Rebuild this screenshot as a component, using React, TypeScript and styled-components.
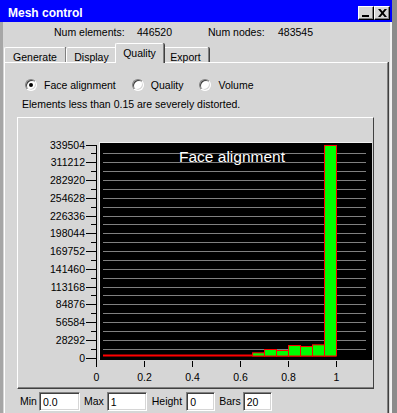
import React from 'react';
import styled, { createGlobalStyle } from 'styled-components';

const GlobalStyle = createGlobalStyle`
  html, body {
    margin: 0;
    padding: 0;
    background: #8c8c8c;
  }
  body {
    font-family: "Liberation Sans", Arial, sans-serif;
    font-size: 10.5px;
    color: #000;
  }
`;

const tabs = ['Generate', 'Display', 'Quality', 'Export'];
const tabWidths = [62, 51, 45, 47];

const yLabels = ['339504', '311212', '282920', '254628', '226336', '198044', '169752',
  '141460', '113168', '84876', '56584', '28292', '0'];
const xLabels = ['0', '0.2', '0.4', '0.6', '0.8', '1'];

// 20 bars, 0..1
const bars = [0, 0, 0, 0, 0, 0, 0, 0, 0, 0, 0, 0, 0, 5150, 10460, 8850, 16900, 15290, 18020, 339504];

const MAX = 339504;
const OX = 78;
const TOP = 27.5;
const BASE = 238;
const HALF = 8.875;

const Chart = () => {
  const scale = (BASE - TOP) / MAX;
  const crisp = (v: number) => Math.floor(v) + 0.5;
  const grid = [];
  for (let k = 1; k <= 23; k++) grid.push(crisp(27 + HALF * k));
  const minor = [];
  for (let k = 1; k < 24; k += 2) minor.push(crisp(27 + HALF * k));

  return (
    <svg width="355" height="270" style={{ display: 'block' }}>
      <rect x="81" y="24" width="273" height="218" fill="#f2f2f2" />
      <rect x="82" y="25" width="272" height="217" fill="#000" />
      {grid.map((y) => (
        <line key={y} x1="85" x2="348" y1={y} y2={y} stroke="#808080" strokeWidth="1" />
      ))}
      <text x="161" y="44.3" fill="#fff" fontSize="15.5" fontFamily="Liberation Sans, Arial, sans-serif">
        Face alignment
      </text>
      <rect x="85" y="236.5" width={OX + 240 - 85} height="2" fill="#ff0000" />
      {bars.map((v, i) => {
        if (v <= 0) return null;
        const h = v * scale;
        const x0 = OX + 12 * i;
        return (
          <rect key={i} x={x0 + 0.5} y={BASE - h} width="12" height={h}
            fill="#00ff00" stroke="#ff0000" strokeWidth="1" />
        );
      })}
      <line x1="78.5" x2="78.5" y1="27" y2="249" stroke="#000" />
      {yLabels.map((t, j) => {
        const y = crisp(27 + 17.75 * j);
        return (
          <g key={t}>
            <line x1="68" x2="78" y1={y} y2={y} stroke="#000" />
            <text x="67" y={y} dy="0.36em" textAnchor="end" fontSize="10.5"
              fontFamily="Liberation Sans, Arial, sans-serif">{t}</text>
          </g>
        );
      })}
      {minor.map((y) => (
        <line key={'m' + y} x1="73" x2="78" y1={y} y2={y} stroke="#000" />
      ))}
      {xLabels.map((t, j) => {
        const x = OX + 48 * j + 0.5;
        return (
          <g key={t}>
            <line x1={x} x2={x} y1="243" y2="249" stroke="#000" />
            <text x={x} y="259" dy="0.36em" textAnchor="middle" fontSize="10.5"
              fontFamily="Liberation Sans, Arial, sans-serif">{t}</text>
          </g>
        );
      })}
    </svg>
  );
};

export default function App() {
  return (
    <>
      <GlobalStyle />
      <Window>
        <TitleBar>
          <TitleText>Mesh control</TitleText>
          <CaptionButtons>
            <CaptionButton $kind="min"><MinGlyph /></CaptionButton>
            <CaptionButton $kind="close">
              <svg width="9" height="8" viewBox="0 0 9 8">
                <path d="M0 0h2.4l2.1 2.6L6.6 0H9L5.7 4 9 8H6.6L4.5 5.4 2.4 8H0l3.3-4z" fill="#000" />
              </svg>
            </CaptionButton>
          </CaptionButtons>
        </TitleBar>
        <Body>
          <InfoRow>
            <span>Num elements:</span>
            <span>446520</span>
            <span>Num nodes:</span>
            <span>483545</span>
          </InfoRow>
          <TabRow>
            {tabs.map((t, i) => (
              <Tab key={t} $active={t === 'Quality'} $w={tabWidths[i]}>{t}</Tab>
            ))}
          </TabRow>
          <Panel>
            <RadioRow>
              <RadioItem><Radio $checked /> Face alignment</RadioItem>
              <RadioItem><Radio /> Quality</RadioItem>
              <RadioItem><Radio /> Volume</RadioItem>
            </RadioRow>
            <Desc>Elements less than 0.15 are severely distorted.</Desc>
            <ChartFrame>
              <Chart />
            </ChartFrame>
            <InputRow>
              <FieldLabel $gap={2}>Min</FieldLabel>
              <Field $w={41} $gap={4} value="0.0" readOnly />
              <FieldLabel $gap={3}>Max</FieldLabel>
              <Field $w={40} $gap={5} value="1" readOnly />
              <FieldLabel $gap={4}>Height</FieldLabel>
              <Field $w={29} $gap={4} value="0" readOnly />
              <FieldLabel $gap={2}>Bars</FieldLabel>
              <Field $w={29} $gap={0} value="20" readOnly />
            </InputRow>
          </Panel>
        </Body>
      </Window>
    </>
  );
}

const Window = styled.div`
  width: 392px;
  height: 413px;
  display: flex;
  flex-direction: column;
  overflow: hidden;
`;

const TitleBar = styled.div`
  height: 22px;
  flex: none;
  background: #0000ff;
  display: flex;
  align-items: center;
  padding: 0 2px 0 8px;
  box-sizing: border-box;
`;

const TitleText = styled.div`
  flex: 1;
  color: #fff;
  font-weight: bold;
  font-size: 12px;
  line-height: 14px;
  padding-top: 4px;
`;

const CaptionButtons = styled.div`
  display: flex;
  margin-top: 3px;
`;

const CaptionButton = styled.div<{ $kind: 'min' | 'close' }>`
  width: 16px;
  height: 14px;
  box-sizing: border-box;
  background: #d6d6d6;
  border: 1px solid;
  border-color: #fff #000 #000 #fff;
  box-shadow: inset -1px -1px #808080;
  display: flex;
  justify-content: center;
  align-items: ${(p) => (p.$kind === 'min' ? 'flex-end' : 'center')};
  padding-bottom: ${(p) => (p.$kind === 'min' ? '2px' : '0')};
`;

const MinGlyph = styled.div`
  width: 7px;
  height: 2px;
  background: #000;
  margin-right: 2px;
`;

const Body = styled.div`
  flex: 1;
  display: flex;
  flex-direction: column;
  background: #d6d6d6;
  border-left: 3px solid #a6a6a6;
  border-right: 2px solid #f2f2f2;
  padding-left: 1px;
`;

const InfoRow = styled.div`
  height: 21px;
  flex: none;
  display: grid;
  grid-template-columns: 83px 71px 70px auto;
  align-items: center;
  padding-left: 50px;
  line-height: 13px;
`;

const TabRow = styled.div`
  height: 19px;
  flex: none;
  display: flex;
  align-items: flex-end;
  position: relative;
  z-index: 1;
`;

const Tab = styled.div<{ $active?: boolean; $w: number }>`
  box-sizing: border-box;
  width: ${(p) => p.$w + (p.$active ? 4 : 0)}px;
  height: ${(p) => (p.$active ? 20 : 15)}px;
  margin: ${(p) => (p.$active ? '0 -2px -1px -2px' : '0')};
  padding-top: 2px;
  line-height: 14px;
  text-align: center;
  background: #d6d6d6;
  border-top: 1px solid #fff;
  border-left: 1px solid #fff;
  border-right: 1px solid #808080;
  box-shadow: 1px 0 0 #404040;
  border-radius: 2px 2px 0 0;
  position: relative;
  z-index: ${(p) => (p.$active ? 2 : 0)};
`;

const Panel = styled.div`
  flex: 1;
  width: 384px;
  box-sizing: border-box;
  border-top: 1px solid #fff;
  border-left: 1px solid #fff;
  border-right: 1px solid #808080;
  box-shadow: 1px 0 0 #404040;
  display: flex;
  flex-direction: column;
`;

const RadioRow = styled.div`
  margin: 14px 0 0 20px;
  height: 16px;
  display: flex;
  align-items: center;
  gap: 16px;
`;

const RadioItem = styled.label`
  display: flex;
  align-items: center;
  gap: 7px;
  line-height: 13px;
`;

const Radio = styled.span<{ $checked?: boolean }>`
  width: 12px;
  height: 12px;
  box-sizing: border-box;
  border-radius: 50%;
  border: 1px solid;
  border-color: #808080 #fff #fff #808080;
  box-shadow: inset 1px 1px #404040, inset -1px -1px #d6d6d6;
  background: #fff;
  display: flex;
  align-items: center;
  justify-content: center;
  &::after {
    content: '';
    width: 4px;
    height: 4px;
    border-radius: 50%;
    background: ${(p) => (p.$checked ? '#000' : 'transparent')};
  }
`;

const Desc = styled.div`
  margin: 5px 0 0 17px;
  line-height: 13px;
`;

const ChartFrame = styled.div`
  margin: 6px 0 0 12px;
  width: 357px;
  height: 272px;
  box-sizing: border-box;
  border: 1px solid;
  border-color: #fff #404040 #404040 #fff;
  box-shadow: inset 0 -1px #808080;
`;

const InputRow = styled.div`
  margin: 3px 0 0 15px;
  height: 19px;
  display: flex;
  align-items: center;
`;

const FieldLabel = styled.span<{ $gap: number }>`
  margin-right: ${(p) => p.$gap}px;
  line-height: 13px;
`;

const Field = styled.input<{ $w: number; $gap: number }>`
  width: ${(p) => p.$w}px;
  height: 19px;
  margin: 0 ${(p) => p.$gap}px 0 0;
  box-sizing: border-box;
  border: 1px solid;
  border-color: #808080 #fff #fff #808080;
  box-shadow: inset 1px 1px #404040, inset -1px -1px #d6d6d6;
  background: #fff;
  padding: 0 0 0 3px;
  font-family: "Liberation Sans", Arial, sans-serif;
  font-size: 10.5px;
  color: #000;
  outline: none;
`;
